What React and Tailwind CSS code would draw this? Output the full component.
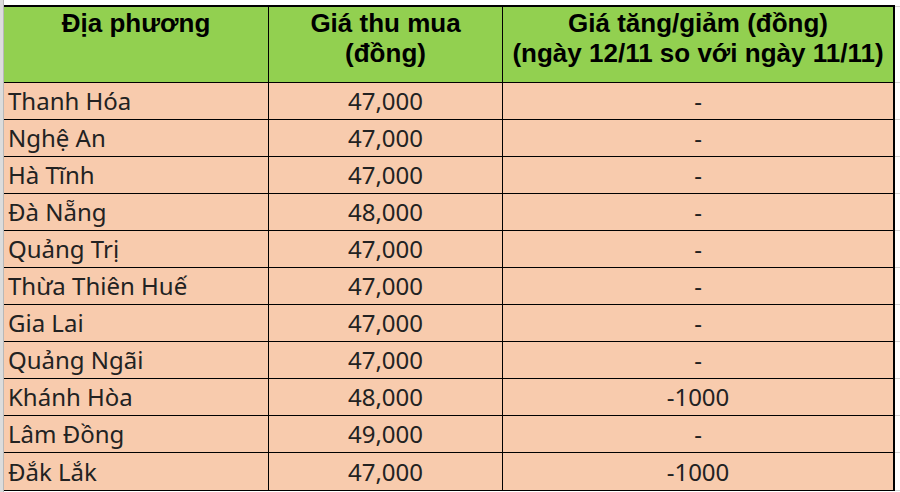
import React from "react";

const rows = [
  ["Thanh Hóa", "47,000", "-"],
  ["Nghệ An", "47,000", "-"],
  ["Hà Tĩnh", "47,000", "-"],
  ["Đà Nẵng", "48,000", "-"],
  ["Quảng Trị", "47,000", "-"],
  ["Thừa Thiên Huế", "47,000", "-"],
  ["Gia Lai", "47,000", "-"],
  ["Quảng Ngãi", "47,000", "-"],
  ["Khánh Hòa", "48,000", "-1000"],
  ["Lâm Đồng", "49,000", "-"],
  ["Đắk Lắk", "47,000", "-1000"],
];

export default function App() {
  return (
    <div className="w-[900px] h-[492px] bg-white flex overflow-hidden">
      <div className="w-[4px] h-full bg-[#dcdcdc] border-r border-[#b8b8b8] shrink-0" />
      <div className="flex flex-col w-[896px]">
        <div className="h-[5px] shrink-0" />
        {/* header */}
        <div className="flex shrink-0">
          <div
            className="flex w-[891px] h-[78px] bg-[#92d050] border-t-2 border-b border-r-2 border-black text-black font-bold text-[26px] leading-[30px]"
            style={{ fontFamily: '"Liberation Sans", Arial, sans-serif' }}
          >
            <div className="w-[265px] border-r border-black text-center pt-[1px]">Địa phương</div>
            <div className="w-[234px] border-r border-black text-center pt-[1px]">
              <div>Giá thu mua</div>
              <div>(đồng)</div>
            </div>
            <div className="flex-1 text-center pt-[1px] whitespace-nowrap">
              <div>Giá tăng/giảm (đồng)</div>
              <div>(ngày 12/11 so với ngày 11/11)</div>
            </div>
          </div>
          <div className="w-[5px] flex flex-col">
            <div className="h-[1px] mt-[1px] bg-[#d4d4d4]" />
            <div className="flex-1" />
            <div className="h-[1px] bg-[#d4d4d4]" />
          </div>
        </div>
        {rows.map((r, i) => (
          <div key={i} className="flex shrink-0">
            <div
              className={`flex w-[891px] ${i === rows.length - 1 ? "h-[38px]" : "h-[37px]"} bg-[#f8cbad] border-b border-r-2 border-black text-[#222222] text-[24px]`}
              style={{ fontFamily: '"Noto Sans", "Open Sans", sans-serif' }}
            >
              <div className="w-[265px] border-r border-black flex items-center pl-[4px] whitespace-nowrap">{r[0]}</div>
              <div className="w-[234px] border-r border-black flex items-center justify-center">{r[1]}</div>
              <div className="flex-1 flex items-center justify-center">{r[2]}</div>
            </div>
            <div className="w-[5px] flex flex-col">
              <div className="flex-1" />
              <div className="h-[1px] bg-[#d4d4d4]" />
            </div>
          </div>
        ))}
      </div>
    </div>
  );
}
